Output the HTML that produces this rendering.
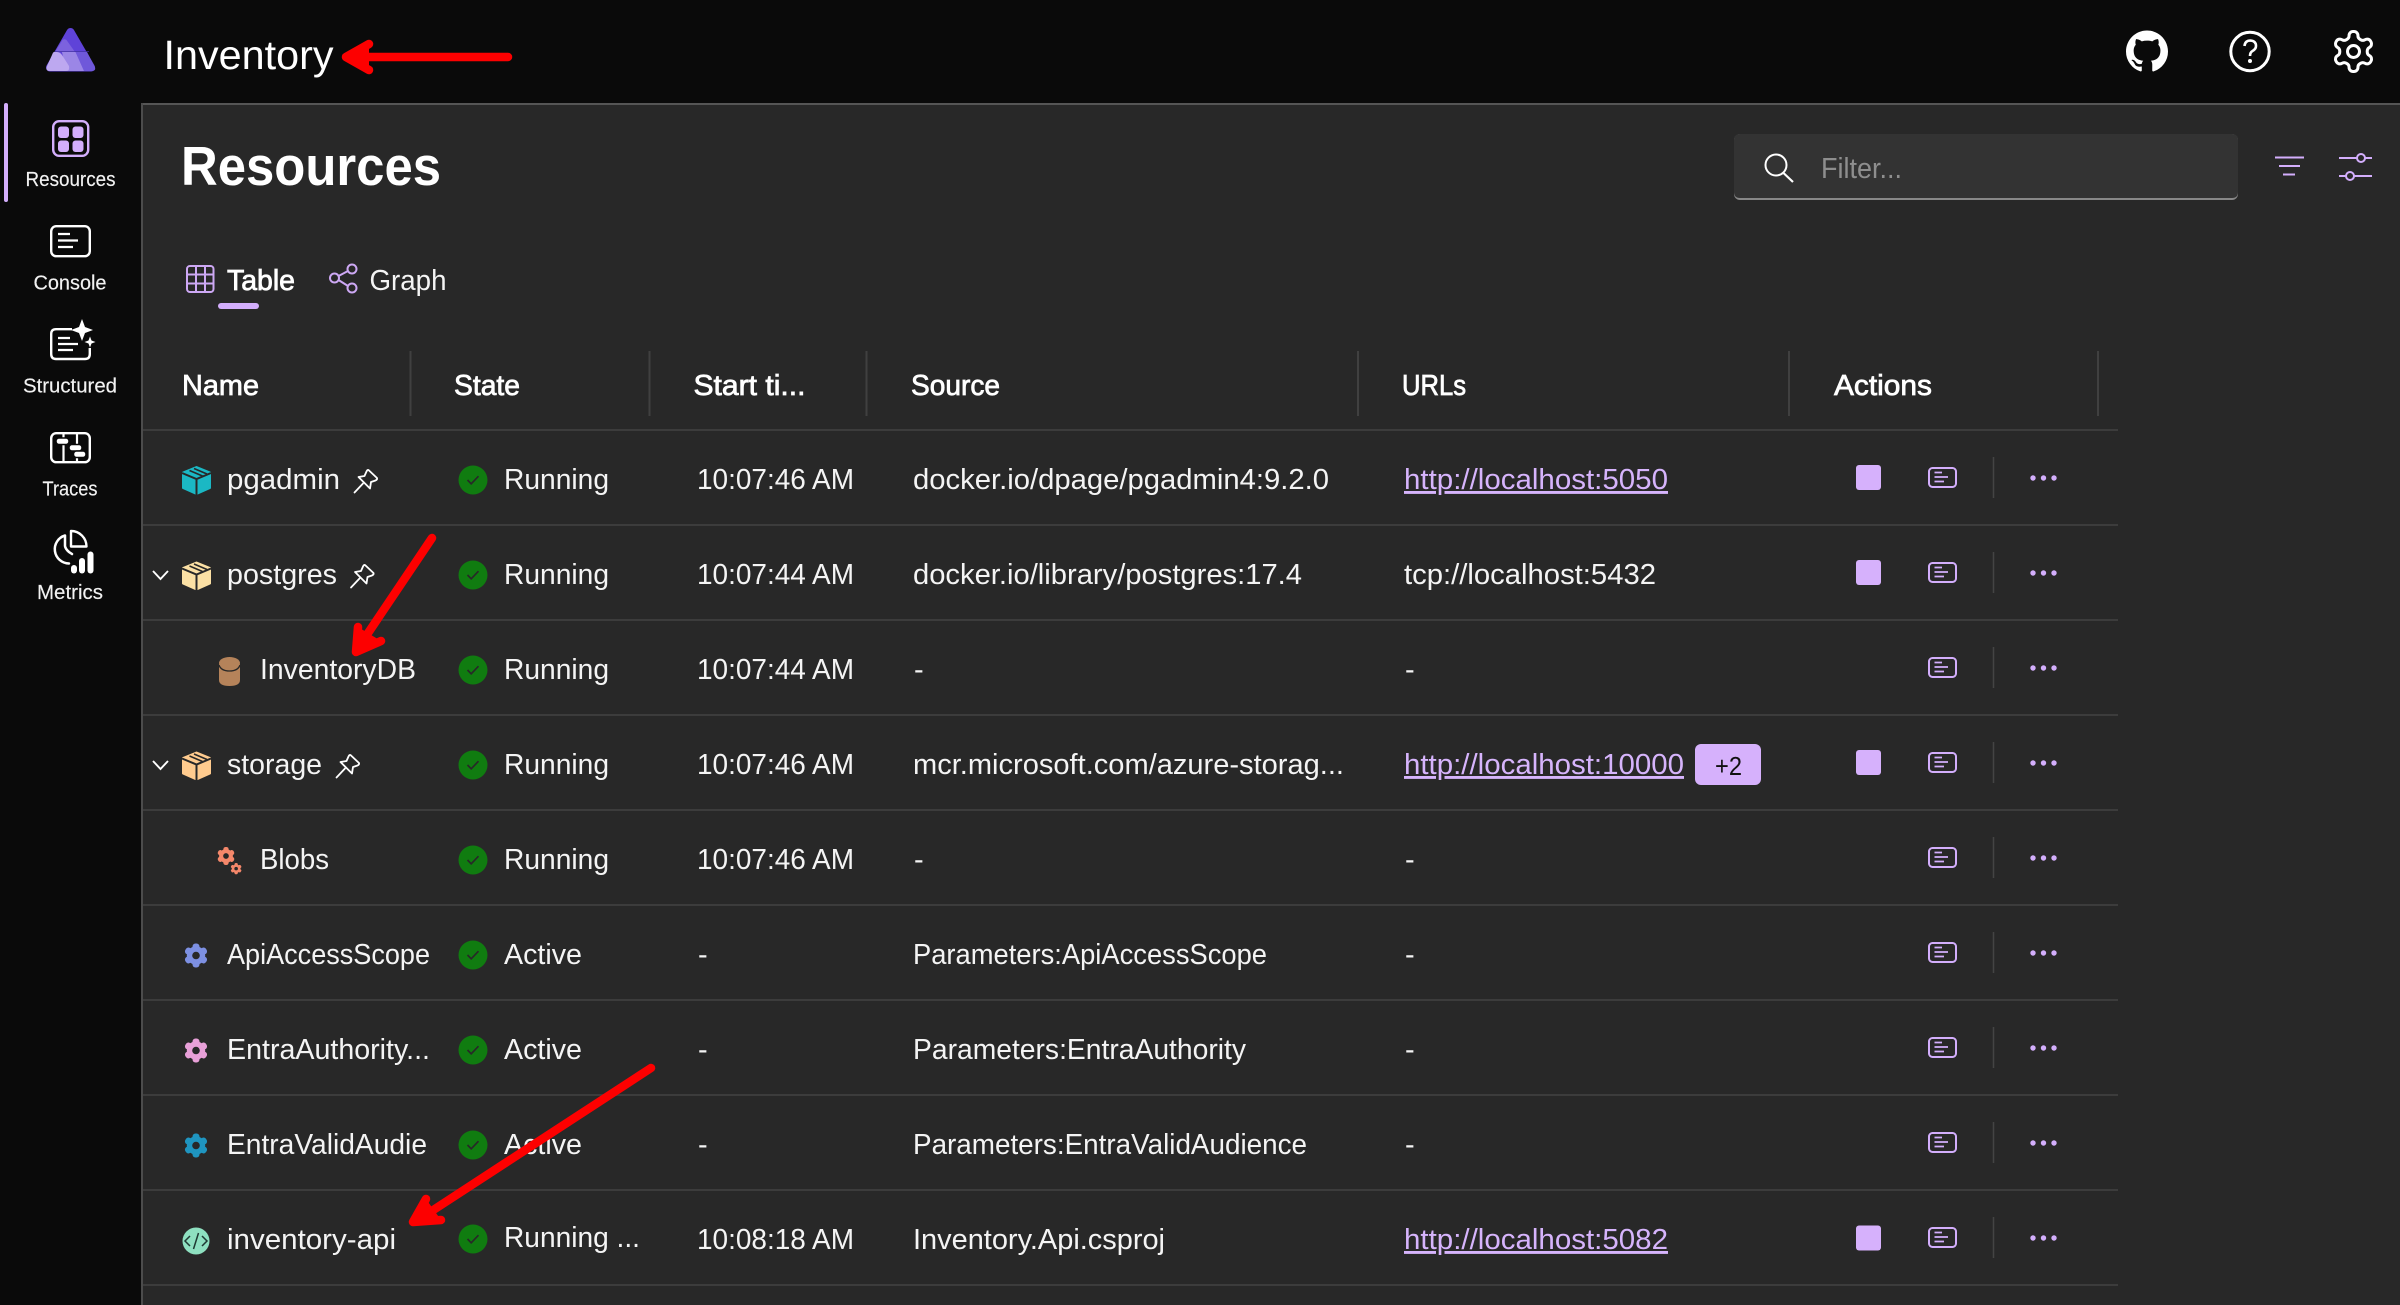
<!DOCTYPE html>
<html lang="en"><head><meta charset="utf-8"><title>Inventory Resources</title>
<style>
html,body{margin:0;padding:0;background:#282828;width:2400px;height:1305px;overflow:hidden}
svg{display:block}
text{font-family:"Liberation Sans",Arial,sans-serif;fill:#f4f4f4;white-space:pre}
.r{font-size:29px}
.s{font-size:20px;fill:#f2f2f2;stroke:#f2f2f2;stroke-width:.15px}
.h{font-size:29px;fill:#fff;stroke:#fff;stroke-width:.75px}
.l{font-size:29px;fill:#d6b4fc}
.u{text-decoration:underline}
</style></head><body>
<svg xmlns="http://www.w3.org/2000/svg" width="2400" height="1305" viewBox="0 0 2400 1305">
<defs>
<g id="box">
<path d="M14.5 1 L28 6.5 V22 L14.5 28 L1 22 V6.5 Z" fill="currentColor" stroke="currentColor" stroke-width="2" stroke-linejoin="round"/>
<path d="M0 7 L14.5 13 L29 7 M14.5 13 V29" fill="none" stroke="#282828" stroke-width="2"/>
<path d="M7.5 4.5 L20.5 10 M12 2.5 L25 8" fill="none" stroke="#282828" stroke-width="1.6"/>
</g>
<g id="pin" fill="none" stroke="#fff" stroke-width="1.8" stroke-linejoin="round" stroke-linecap="round">
<path d="M15 1.5 L23.5 9.5 Q24 11 22 12 L17.5 13.5 L16.5 20 L5 8.5 L11 7.5 L13 3 Q14 1 15 1.5 Z"/><path d="M9.5 15 L1 24"/>
</g>
<g id="gear" fill="currentColor">
<circle cx="12" cy="12" r="9.2"/>
<rect x="8.5" y="0" width="7" height="24" rx="3"/>
<rect x="8.5" y="0" width="7" height="24" rx="3" transform="rotate(60 12 12)"/>
<rect x="8.5" y="0" width="7" height="24" rx="3" transform="rotate(120 12 12)"/>
<circle cx="12" cy="12" r="3.8" fill="#282828"/>
</g>
<g id="chk"><circle r="14.5" fill="#107c10"/><path d="M-5.5 0 L-1.8 3.8 L5.5 -3.8" fill="none" stroke="#282828" stroke-width="1.7"/></g>
<g id="con" fill="none" stroke="#d3aefc" stroke-width="2">
<rect x="1" y="1" width="27" height="19" rx="3.5"/>
<path d="M6.5 5.5 H14 M6.5 10 H20 M6.5 14.5 H16" stroke-width="1.8"/>
</g>
<g id="dots" fill="#d3aefc"><circle cx="0" r="2.7"/><circle cx="10.5" r="2.7"/><circle cx="21" r="2.7"/></g>
<g id="sep"><rect x="-.75" y="-21" width="1.5" height="41" fill="#444"/></g>
<rect id="stop" width="25" height="25" rx="3" fill="#d6b1fc"/>
</defs>

<rect width="2400" height="1305" fill="#282828"/>
<rect width="2400" height="103" fill="#0a0a0a"/>
<rect width="141" height="1305" fill="#0a0a0a"/>
<rect x="141" y="103" width="2259" height="2" fill="#555"/>
<rect x="141" y="103" width="2" height="1202" fill="#4c4c4c"/>

<!-- logo -->
<path d="M70.5 32 L91 67.5 H50 Z" fill="#5f43d8" stroke="#5f43d8" stroke-width="8" stroke-linejoin="round"/>
<path d="M75 52 L66.5 40 Q64.5 38.5 62.5 40 L55 52 Z" fill="#7c62de"/>
<path d="M75.5 52 H87 L95 67 Q96 71 92 71 H84 Z" fill="#6f58da"/>
<path d="M62 52 H75.5 L84 71 H66 Z" fill="#9b86e6"/>
<path d="M54 52 H57 Q60 52 62 55 L69 66 Q70 71 66 71 H50 Q45 71 47 66 L52 55 Q53 52 54 52 Z" fill="#bda8f0"/>
<rect x="55" y="51" width="34" height="1" fill="#3f2fa0" opacity=".7"/>

<text x="163.5" y="69" font-size="41" style="fill:#fff" textLength="170" lengthAdjust="spacingAndGlyphs">Inventory</text>

<!-- top right icons -->
<g transform="translate(2126,30.5) scale(2.625)" fill="#fff"><path d="M8 0c4.42 0 8 3.58 8 8a8.013 8.013 0 0 1-5.45 7.59c-.4.08-.55-.17-.55-.38 0-.27.01-1.13.01-2.2 0-.75-.25-1.23-.54-1.48 1.78-.2 3.65-.88 3.65-3.95 0-.88-.31-1.59-.82-2.15.08-.2.36-1.02-.08-2.12 0 0-.67-.22-2.2.82-.64-.18-1.32-.27-2-.27-.68 0-1.36.09-2 .27-1.53-1.03-2.2-.82-2.2-.82-.44 1.1-.16 1.92-.08 2.12-.51.56-.82 1.28-.82 2.15 0 3.06 1.86 3.75 3.64 3.95-.23.2-.44.55-.51 1.07-.46.21-1.61.55-2.33-.66-.15-.24-.6-.83-1.23-.82-.67.01-.27.38.01.53.34.19.73.9.82 1.13.16.45.68 1.31 2.69.94 0 .67.01 1.3.01 1.49 0 .21-.15.45-.55.38A7.995 7.995 0 0 1 0 8c0-4.42 3.58-8 8-8Z"/></g>
<circle cx="2250" cy="51.5" r="19.2" fill="none" stroke="#fff" stroke-width="3"/>
<path d="M2244.5 46 Q2245 40.5 2250.5 40.5 Q2256 41 2256 46 Q2256 49 2252.5 51 Q2250 52.5 2250 56" fill="none" stroke="#fff" stroke-width="2.6"/>
<circle cx="2250" cy="61" r="2" fill="#fff"/>
<g transform="translate(2329.5,27.5) scale(2)" fill="none" stroke="#fff" stroke-width="1.5"><path d="M12.22 2h-.44a2 2 0 0 0-2 2v.18a2 2 0 0 1-1 1.73l-.43.25a2 2 0 0 1-2 0l-.15-.08a2 2 0 0 0-2.73.73l-.22.38a2 2 0 0 0 .73 2.73l.15.1a2 2 0 0 1 1 1.72v.51a2 2 0 0 1-1 1.74l-.15.09a2 2 0 0 0-.73 2.73l.22.38a2 2 0 0 0 2.73.73l.15-.08a2 2 0 0 1 2 0l.43.25a2 2 0 0 1 1 1.73V20a2 2 0 0 0 2 2h.44a2 2 0 0 0 2-2v-.18a2 2 0 0 1 1-1.73l.43-.25a2 2 0 0 1 2 0l.15.08a2 2 0 0 0 2.73-.73l.22-.39a2 2 0 0 0-.73-2.73l-.15-.08a2 2 0 0 1-1-1.74v-.5a2 2 0 0 1 1-1.74l.15-.09a2 2 0 0 0 .73-2.73l-.22-.38a2 2 0 0 0-2.73-.73l-.15.08a2 2 0 0 1-2 0l-.43-.25a2 2 0 0 1-1-1.73V4a2 2 0 0 0-2-2z"/><circle cx="12" cy="12" r="3"/></g>

<!-- sidebar -->
<rect x="4" y="103" width="4" height="99" rx="2" fill="#d3aefc"/>
<rect x="53.2" y="121.2" width="35" height="34.6" rx="6" fill="none" stroke="#d3aefc" stroke-width="2.4"/>
<g fill="#d3aefc"><rect x="58" y="126.5" width="11" height="11.5" rx="3"/><rect x="72.5" y="126.5" width="11" height="11.5" rx="3"/><rect x="58" y="140.5" width="11" height="11.5" rx="3"/><rect x="72.5" y="140.5" width="11" height="11.5" rx="3"/></g>
<text class="s" x="25.5" y="186" textLength="90" lengthAdjust="spacingAndGlyphs">Resources</text>

<rect x="51.2" y="226.2" width="38.6" height="30" rx="5" fill="none" stroke="#fff" stroke-width="2.4"/>
<path d="M58 234 H70 M58 240.5 H78 M58 247 H73" stroke="#fff" stroke-width="2.2" fill="none"/>
<text class="s" x="33.5" y="289.5" textLength="73" lengthAdjust="spacingAndGlyphs">Console</text>

<path d="M72 329.2 H56 Q51.2 329.2 51.2 334 V354 Q51.2 359 56 359 H85 Q89.8 359 89.8 354 V348" fill="none" stroke="#fff" stroke-width="2.4"/>
<path d="M58 338 H70 M58 344 H78 M58 350 H73" stroke="#fff" stroke-width="2.2" fill="none"/>
<path d="M82 319 L85 327 L93 330 L85 333 L82 341 L79 333 L71 330 L79 327 Z M90 336.5 L91.5 340.5 L95.5 342 L91.5 343.5 L90 347.5 L88.5 343.5 L84.5 342 L88.5 340.5 Z" fill="#fff"/>
<text class="s" x="23" y="392.5" textLength="94" lengthAdjust="spacingAndGlyphs">Structured</text>

<rect x="51.2" y="433.2" width="38.6" height="29" rx="5" fill="none" stroke="#fff" stroke-width="2.4"/>
<path d="M63.5 433 V462 M77 433 V462" stroke="#fff" stroke-width="2.2" fill="none"/>
<g fill="#fff" stroke="#0a0a0a" stroke-width="1.5"><rect x="56" y="438" width="13" height="6.5" rx="3"/><rect x="69" y="444.5" width="13" height="6.5" rx="3"/><rect x="73.5" y="451" width="12.5" height="6.5" rx="3"/></g>
<text class="s" x="42.5" y="495.5" textLength="55" lengthAdjust="spacingAndGlyphs">Traces</text>

<path d="M65 535.5 A14.3 14.3 0 0 0 69 563.5 M65 535.5 V546 Q65.5 549 69 552 L72 554" fill="none" stroke="#fff" stroke-width="2.5" stroke-linecap="round"/>
<path d="M71 531 A15.5 15.5 0 0 1 86.5 546.5 H71 Z" fill="none" stroke="#fff" stroke-width="2.4" stroke-linejoin="round"/>
<g fill="#fff"><rect x="71" y="565" width="6" height="8.5" rx="3"/><rect x="79" y="558" width="6" height="15.5" rx="3"/><rect x="87.5" y="551.5" width="6" height="22" rx="3"/></g>
<text class="s" x="37" y="599" textLength="66" lengthAdjust="spacingAndGlyphs">Metrics</text>

<!-- heading -->
<text x="181" y="185" font-size="55" font-weight="700" style="fill:#fff" textLength="260" lengthAdjust="spacingAndGlyphs">Resources</text>

<!-- filter -->
<rect x="1734" y="134" width="504" height="66" rx="6" fill="#888"/>
<path d="M1734 140 Q1734 134 1740 134 H2232 Q2238 134 2238 140 V192 Q2238 198 2232 198 H1740 Q1734 198 1734 192 Z" fill="#333"/>
<circle cx="1776" cy="165" r="10.5" fill="none" stroke="#fff" stroke-width="2"/>
<path d="M1783.5 173 L1793 182" stroke="#fff" stroke-width="2.2"/>
<text class="r" x="1821" y="178" style="fill:#8e8e8e" textLength="81" lengthAdjust="spacingAndGlyphs">Filter...</text>
<path d="M2275 157.5 H2304 M2279 166 H2300 M2283 174.5 H2295" stroke="#d3aefc" stroke-width="2" fill="none"/>
<g fill="none" stroke="#d3aefc" stroke-width="2"><path d="M2339 158 H2357 M2365 158 H2372 M2339 176 H2346 M2354 176 H2372"/><circle cx="2361" cy="158" r="4"/><circle cx="2350" cy="176" r="4"/></g>

<!-- tabs -->
<g fill="none" stroke="#cda8f4" stroke-width="2"><rect x="187" y="266" width="26.5" height="26" rx="3"/><path d="M196 266 V292 M205 266 V292 M187 274.5 H213.5 M187 283.5 H213.5"/></g>
<text class="h" x="227" y="290" textLength="68" lengthAdjust="spacingAndGlyphs">Table</text>
<rect x="218" y="303" width="41" height="6" rx="3" fill="#d3aefc"/>
<g fill="none" stroke="#cda8f4" stroke-width="2"><circle cx="334.5" cy="278" r="4.5"/><circle cx="352" cy="269" r="4.5"/><circle cx="352" cy="288" r="4.5"/><path d="M338.5 276 L348 271 M338.5 280 L348 286"/></g>
<text class="r" x="369.5" y="290" textLength="77" lengthAdjust="spacingAndGlyphs">Graph</text>

<!-- header -->
<text class="h" x="182" y="395" textLength="77" lengthAdjust="spacingAndGlyphs">Name</text>
<text class="h" x="454" y="395" textLength="66" lengthAdjust="spacingAndGlyphs">State</text>
<text class="h" x="693.5" y="395" textLength="112" lengthAdjust="spacingAndGlyphs">Start ti...</text>
<text class="h" x="911" y="395" textLength="89" lengthAdjust="spacingAndGlyphs">Source</text>
<text class="h" x="1402" y="395" textLength="64" lengthAdjust="spacingAndGlyphs">URLs</text>
<text class="h" x="1834" y="395" textLength="98" lengthAdjust="spacingAndGlyphs">Actions</text>
<g fill="#404040"><rect x="409.5" y="351" width="2" height="65"/><rect x="648.5" y="351" width="2" height="65"/><rect x="865.5" y="351" width="2" height="65"/><rect x="1357" y="351" width="2" height="65"/><rect x="1788" y="351" width="2" height="65"/><rect x="2097" y="351" width="2" height="65"/></g>

<!-- row lines -->
<g fill="#3c3c3c"><rect x="143" y="429" width="1975" height="2"/><rect x="143" y="524" width="1975" height="2"/><rect x="143" y="619" width="1975" height="2"/><rect x="143" y="714" width="1975" height="2"/><rect x="143" y="809" width="1975" height="2"/><rect x="143" y="904" width="1975" height="2"/><rect x="143" y="999" width="1975" height="2"/><rect x="143" y="1094" width="1975" height="2"/><rect x="143" y="1189" width="1975" height="2"/><rect x="143" y="1284" width="1975" height="2"/></g>

<!-- name icons -->
<use href="#box" x="182" y="466" color="#1bb8c4"/>
<use href="#box" x="182" y="561.5" color="#fbe0a4"/>
<use href="#box" x="182" y="751.5" color="#ffcb8e"/>
<use href="#pin" x="353.5" y="468.5"/>
<use href="#pin" x="350" y="563.5"/>
<use href="#pin" x="335.5" y="753.5"/>
<path d="M153 571 L160.5 579 L168 571" fill="none" stroke="#fff" stroke-width="1.9"/>
<path d="M153 761 L160.5 769 L168 761" fill="none" stroke="#fff" stroke-width="1.9"/>
<path d="M219 664 V680 Q219 686 229.5 686 Q240 686 240 680 V664 Z" fill="#b5835a"/>
<ellipse cx="229.5" cy="663" rx="10.5" ry="6" fill="#b5835a"/>
<path d="M219 665 Q221 671 229.5 671 Q238 671 240 665" fill="none" stroke="#282828" stroke-width="1.3"/>
<use href="#gear" transform="translate(217,847) scale(.75)" color="#f4876a"/>
<use href="#gear" transform="translate(230.5,863) scale(.47)" color="#f4876a"/>
<use href="#gear" x="184" y="943.5" color="#7d90e2"/>
<use href="#gear" x="184" y="1038.5" color="#e8a0d8"/>
<use href="#gear" x="184" y="1133.5" color="#1f95c0"/>
<circle cx="196" cy="1241" r="13.5" fill="#8ee0c0"/>
<path d="M190 1236 L185 1241 L190 1246 M202 1236 L207 1241 L202 1246 M198.5 1233 L193.5 1249" fill="none" stroke="#1f3a33" stroke-width="1.5"/>

<!-- names -->
<text class="r" x="227" y="489" textLength="113" lengthAdjust="spacingAndGlyphs">pgadmin</text>
<text class="r" x="227" y="584" textLength="110" lengthAdjust="spacingAndGlyphs">postgres</text>
<text class="r" x="260" y="679" textLength="156" lengthAdjust="spacingAndGlyphs">InventoryDB</text>
<text class="r" x="227" y="774" textLength="95" lengthAdjust="spacingAndGlyphs">storage</text>
<text class="r" x="260" y="869" textLength="69" lengthAdjust="spacingAndGlyphs">Blobs</text>
<text class="r" x="227" y="964" textLength="203" lengthAdjust="spacingAndGlyphs">ApiAccessScope</text>
<text class="r" x="227" y="1059" textLength="203" lengthAdjust="spacingAndGlyphs">EntraAuthority...</text>
<text class="r" x="227" y="1154" textLength="200" lengthAdjust="spacingAndGlyphs">EntraValidAudie</text>
<text class="r" x="227" y="1249" textLength="169" lengthAdjust="spacingAndGlyphs">inventory-api</text>

<!-- state -->
<use href="#chk" x="473" y="480"/><use href="#chk" x="473" y="575"/><use href="#chk" x="473" y="670"/><use href="#chk" x="473" y="765"/><use href="#chk" x="473" y="860"/><use href="#chk" x="473" y="955"/><use href="#chk" x="473" y="1050"/><use href="#chk" x="473" y="1145"/><use href="#chk" x="473" y="1239"/>
<text class="r" x="504" y="489" textLength="105" lengthAdjust="spacingAndGlyphs">Running</text>
<text class="r" x="504" y="584" textLength="105" lengthAdjust="spacingAndGlyphs">Running</text>
<text class="r" x="504" y="679" textLength="105" lengthAdjust="spacingAndGlyphs">Running</text>
<text class="r" x="504" y="774" textLength="105" lengthAdjust="spacingAndGlyphs">Running</text>
<text class="r" x="504" y="869" textLength="105" lengthAdjust="spacingAndGlyphs">Running</text>
<text class="r" x="504" y="964" textLength="78" lengthAdjust="spacingAndGlyphs">Active</text>
<text class="r" x="504" y="1059" textLength="78" lengthAdjust="spacingAndGlyphs">Active</text>
<text class="r" x="504" y="1154" textLength="78" lengthAdjust="spacingAndGlyphs">Active</text>
<text class="r" x="504" y="1247" textLength="136" lengthAdjust="spacingAndGlyphs">Running ...</text>

<!-- start -->
<text class="r" x="697" y="489" textLength="157" lengthAdjust="spacingAndGlyphs">10:07:46 AM</text>
<text class="r" x="697" y="584" textLength="157" lengthAdjust="spacingAndGlyphs">10:07:44 AM</text>
<text class="r" x="697" y="679" textLength="157" lengthAdjust="spacingAndGlyphs">10:07:44 AM</text>
<text class="r" x="697" y="774" textLength="157" lengthAdjust="spacingAndGlyphs">10:07:46 AM</text>
<text class="r" x="697" y="869" textLength="157" lengthAdjust="spacingAndGlyphs">10:07:46 AM</text>
<text class="r" x="698" y="964">-</text>
<text class="r" x="698" y="1059">-</text>
<text class="r" x="698" y="1154">-</text>
<text class="r" x="697" y="1249" textLength="157" lengthAdjust="spacingAndGlyphs">10:08:18 AM</text>

<!-- source -->
<text class="r" x="913" y="489" textLength="416" lengthAdjust="spacingAndGlyphs">docker.io/dpage/pgadmin4:9.2.0</text>
<text class="r" x="913" y="584" textLength="389" lengthAdjust="spacingAndGlyphs">docker.io/library/postgres:17.4</text>
<text class="r" x="914" y="679">-</text>
<text class="r" x="913" y="774" textLength="431" lengthAdjust="spacingAndGlyphs">mcr.microsoft.com/azure-storag...</text>
<text class="r" x="914" y="869">-</text>
<text class="r" x="913" y="964" textLength="354" lengthAdjust="spacingAndGlyphs">Parameters:ApiAccessScope</text>
<text class="r" x="913" y="1059" textLength="333" lengthAdjust="spacingAndGlyphs">Parameters:EntraAuthority</text>
<text class="r" x="913" y="1154" textLength="394" lengthAdjust="spacingAndGlyphs">Parameters:EntraValidAudience</text>
<text class="r" x="913" y="1249" textLength="252" lengthAdjust="spacingAndGlyphs">Inventory.Api.csproj</text>

<!-- urls -->
<text class="l u" x="1404" y="489" textLength="264" lengthAdjust="spacingAndGlyphs">http://localhost:5050</text>
<text class="r" x="1404" y="584" textLength="252" lengthAdjust="spacingAndGlyphs">tcp://localhost:5432</text>
<text class="r" x="1405" y="679">-</text>
<text class="l u" x="1404" y="774" textLength="280" lengthAdjust="spacingAndGlyphs">http://localhost:10000</text>
<rect x="1695" y="744" width="66" height="41" rx="6" fill="#d6b1fc"/>
<text x="1715" y="775" font-size="26" style="fill:#111" textLength="27" lengthAdjust="spacingAndGlyphs">+2</text>
<text class="r" x="1405" y="869">-</text>
<text class="r" x="1405" y="964">-</text>
<text class="r" x="1405" y="1059">-</text>
<text class="r" x="1405" y="1154">-</text>
<text class="l u" x="1404" y="1249" textLength="264" lengthAdjust="spacingAndGlyphs">http://localhost:5082</text>

<!-- actions -->
<use href="#stop" x="1856" y="465"/><use href="#stop" x="1856" y="560"/><use href="#stop" x="1856" y="750"/><use href="#stop" x="1856" y="1225.5"/>
<use href="#con" x="1928" y="467"/><use href="#con" x="1928" y="562"/><use href="#con" x="1928" y="657"/><use href="#con" x="1928" y="752"/><use href="#con" x="1928" y="847"/><use href="#con" x="1928" y="942"/><use href="#con" x="1928" y="1037"/><use href="#con" x="1928" y="1132"/><use href="#con" x="1928" y="1227"/>
<use href="#sep" x="1993.5" y="478"/><use href="#sep" x="1993.5" y="573"/><use href="#sep" x="1993.5" y="668"/><use href="#sep" x="1993.5" y="763"/><use href="#sep" x="1993.5" y="858"/><use href="#sep" x="1993.5" y="953"/><use href="#sep" x="1993.5" y="1048"/><use href="#sep" x="1993.5" y="1143"/><use href="#sep" x="1993.5" y="1238"/>
<use href="#dots" x="2033" y="478"/><use href="#dots" x="2033" y="573"/><use href="#dots" x="2033" y="668"/><use href="#dots" x="2033" y="763"/><use href="#dots" x="2033" y="858"/><use href="#dots" x="2033" y="953"/><use href="#dots" x="2033" y="1048"/><use href="#dots" x="2033" y="1143"/><use href="#dots" x="2033" y="1238"/>

<!-- red arrows -->
<g fill="none" stroke="#fd0000" stroke-width="8.5" stroke-linecap="round" stroke-linejoin="round">
<path d="M508 57 H350"/><path d="M369 44 L346 57 L369 70" fill="#fd0000"/>
<path d="M432 538 L358 648"/><path d="M358 627 L356 652 L381 641" fill="#fd0000"/>
<path d="M651 1068 L418 1220"/><path d="M426 1199 L413 1222 L441 1220" fill="#fd0000"/>
</g>
</svg>
</body></html>
